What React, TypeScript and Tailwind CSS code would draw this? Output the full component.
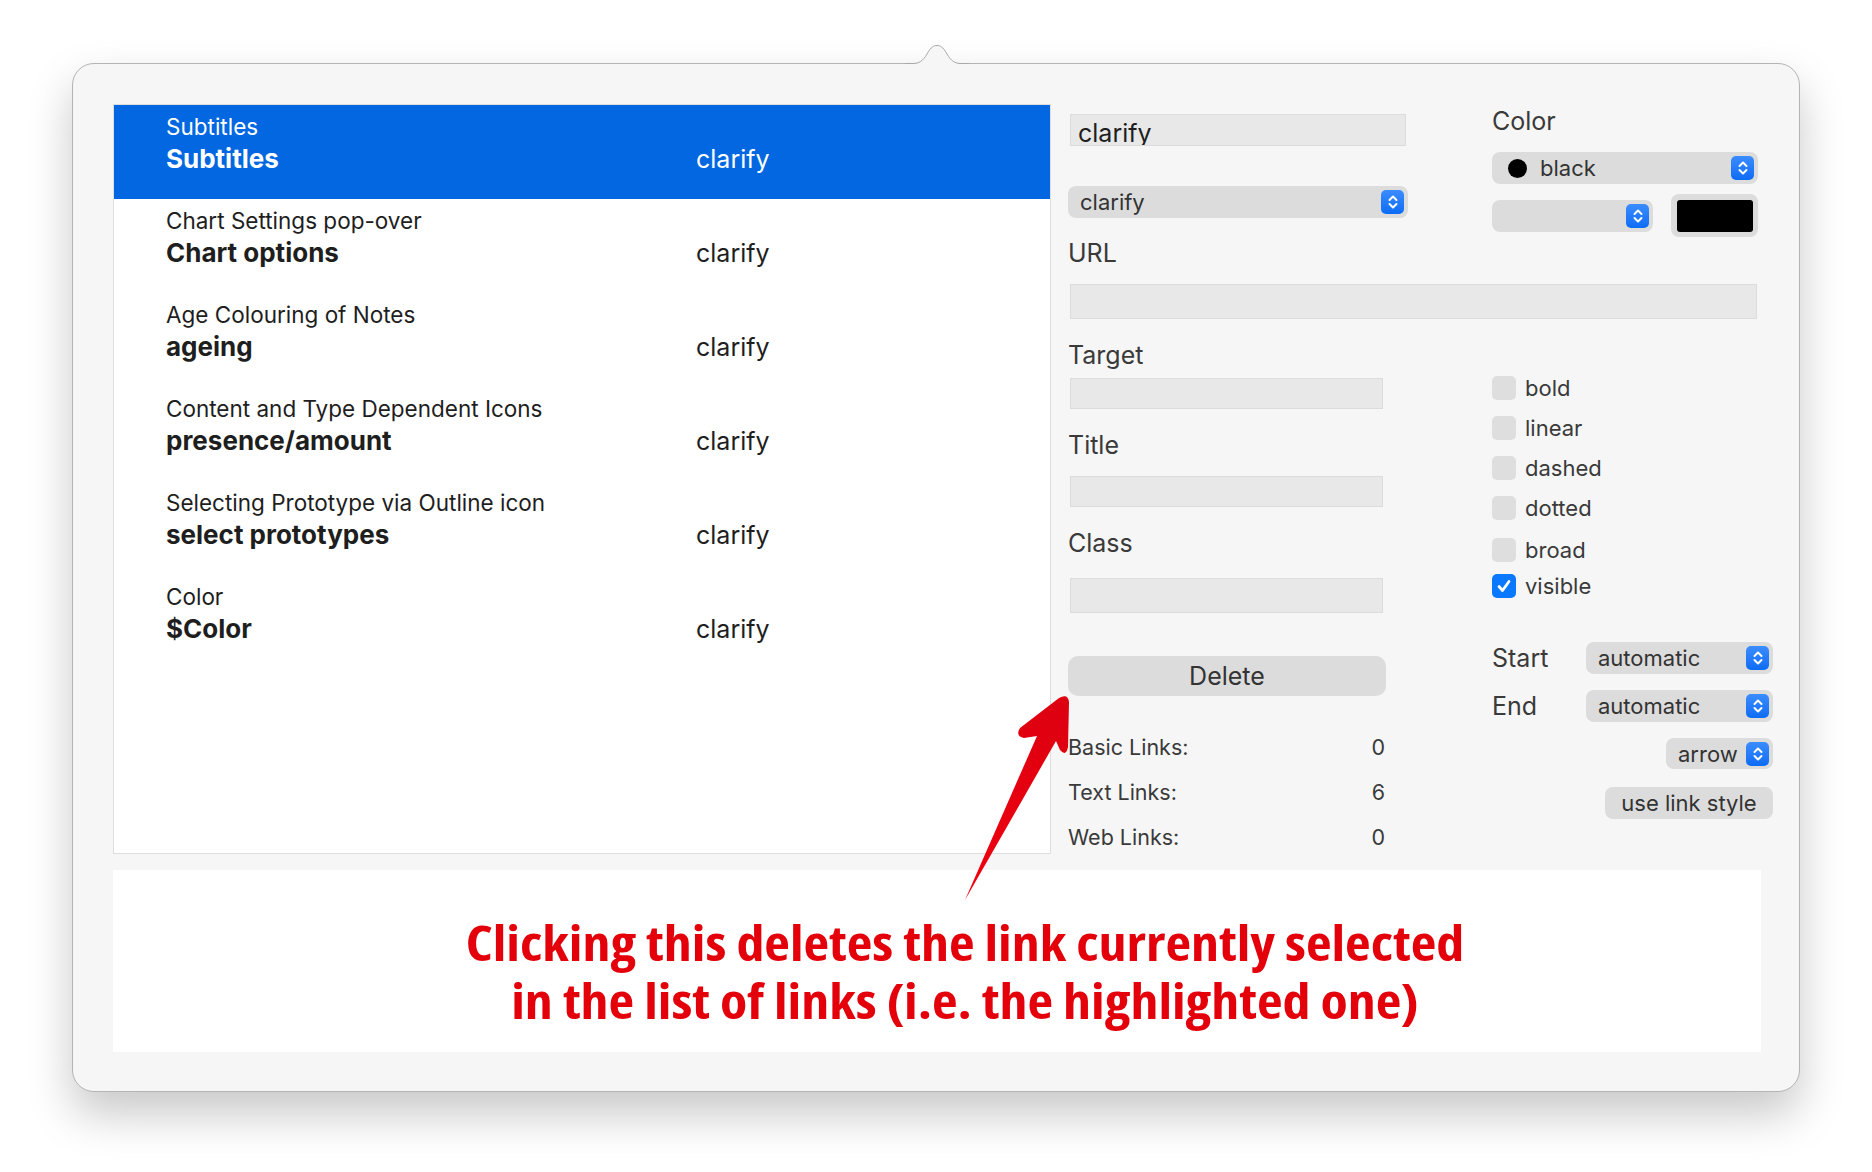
import React from 'react';

const rows = [
  { sub: 'Subtitles', name: 'Subtitles' },
  { sub: 'Chart Settings pop-over', name: 'Chart options' },
  { sub: 'Age Colouring of Notes', name: 'ageing' },
  { sub: 'Content and Type Dependent Icons', name: 'presence/amount' },
  { sub: 'Selecting Prototype via Outline icon', name: 'select prototypes' },
  { sub: 'Color', name: '$Color' },
];

function Stepper() {
  return (
    <div className="flex h-[24px] w-[23px] shrink-0 items-center justify-center rounded-[5px] bg-gradient-to-b from-[#3a8cff] to-[#0a6cf5]">
      <svg width="14" height="20" viewBox="0 0 14 20" fill="none">
        <path d="M3.5 8 L7 4.5 L10.5 8" stroke="white" strokeWidth="2" strokeLinecap="round" strokeLinejoin="round" />
        <path d="M3.5 12 L7 15.5 L10.5 12" stroke="white" strokeWidth="2" strokeLinecap="round" strokeLinejoin="round" />
      </svg>
    </div>
  );
}

function Popup({ label, className, textClass = 'pl-[12px]' }: { label?: string; className: string; textClass?: string }) {
  return (
    <div className={`flex items-center justify-between rounded-[8px] bg-[#dcdcdc] pr-[4px] text-[22px] leading-[28px] text-[#333] ${className}`}>
      <span className={textClass}>{label}</span>
      <Stepper />
    </div>
  );
}

function Check({ label, checked }: { label: string; checked?: boolean }) {
  return (
    <div className="flex h-[24px] items-center gap-[9px] text-[22px] leading-[28px] text-[#3a3a3a]">
      {checked ? (
        <div className="flex h-[24px] w-[24px] items-center justify-center rounded-[5px] bg-[#0a78ff]">
          <svg width="18" height="18" viewBox="0 0 18 18" fill="none">
            <path d="M4 9.5 L7.5 13.5 L14 4.5" stroke="white" strokeWidth="2.8" strokeLinecap="round" strokeLinejoin="round" />
          </svg>
        </div>
      ) : (
        <div className="h-[24px] w-[24px] rounded-[5px] bg-[#dedede]" />
      )}
      <span>{label}</span>
    </div>
  );
}

function Stat({ label, value }: { label: string; value: string }) {
  return (
    <div className="flex h-[28px] w-[317px] items-center justify-between text-[21.5px] leading-[28px] text-[#3a3a3a]">
      <span>{label}</span>
      <span>{value}</span>
    </div>
  );
}

export default function App() {
  return (
    <div className="relative h-[1172px] w-[1872px] overflow-hidden bg-white pl-[72px] pt-[63px] font-['Inter',sans-serif] leading-[30px]">
      <div className="relative flex h-[1029px] w-[1728px] flex-col rounded-[22px] border border-[#b4b4b4] bg-[#f6f6f6] pl-[40px] pt-[40px] shadow-[0_22px_45px_rgba(0,0,0,0.22)]">
        {/* nub */}
        <svg className="absolute left-[832px] top-[-20px]" width="64" height="22" viewBox="0 0 64 22">
          <path d="M0 19.5 L8 19.5 C14 19.5 18 17 22 10 C26 2.5 29 1.5 32 1.5 C35 1.5 38 2.5 42 10 C46 17 50 19.5 56 19.5 L64 19.5 L64 22 L0 22 Z" fill="#f6f6f6" />
          <path d="M0 19.5 L8 19.5 C14 19.5 18 17 22 10 C26 2.5 29 1.5 32 1.5 C35 1.5 38 2.5 42 10 C46 17 50 19.5 56 19.5 L64 19.5" fill="none" stroke="#a9a9a9" strokeWidth="1" />
        </svg>

        <div className="flex items-start gap-[17px]">
          {/* link list */}
          <div className="h-[750px] w-[938px] border border-[#dedede] bg-white">
            {rows.map((r, i) => {
              const sel = i === 0;
              return (
                <div key={r.name} className={`flex h-[94px] pt-[9px] ${sel ? 'bg-[#0267e0] text-white' : 'text-[#1e1e1e]'}`}>
                  <div className="w-[582px] pl-[52px]">
                    <div className="text-[22.5px] leading-[26px]">{r.sub}</div>
                    <div className="mt-[4px] text-[26px] font-bold leading-[30px]">{r.name}</div>
                  </div>
                  <div className="mt-[30px] text-[25px] leading-[30px]">clarify</div>
                </div>
              );
            })}
          </div>

          {/* inspector */}
          <div className="grid grid-cols-[340px_281px] content-start gap-x-[84px]">
            <div className="flex flex-col">
              <div className="ml-[2px] mt-[10px] h-[32px] w-[336px] overflow-hidden border border-[#dcdcdc] bg-[#e8e8e8] pl-[7px] pt-[3px] text-[25px] leading-[30px] text-[#1e1e1e]">
                clarify
              </div>
              <Popup label="clarify" className="mt-[40px] h-[32px] w-[340px]" />
            </div>
            <div className="flex flex-col">
              <div className="mt-[2px] text-[25px] leading-[30px] text-[#3a3a3a]">Color</div>
              <div className="mt-[16px] flex h-[32px] w-[266px] items-center justify-between rounded-[8px] bg-[#dcdcdc] pr-[4px] text-[22px] leading-[28px] text-[#333]">
                <div className="flex items-center gap-[13px] pl-[16px]">
                  <div className="h-[19px] w-[19px] rounded-full bg-black" />
                  <span>black</span>
                </div>
                <Stepper />
              </div>
              <div className="mt-[10px] flex items-start gap-[18px]">
                <Popup className="mt-[6px] h-[32px] w-[161px]" />
                <div className="flex h-[43px] w-[87px] items-center justify-center rounded-[8px] bg-[#dcdcdc]">
                  <div className="h-[32px] w-[76px] rounded-[3px] bg-black" />
                </div>
              </div>
            </div>

            <div className="col-span-2 flex flex-col">
              <div className="mt-[1px] text-[25px] leading-[30px] text-[#3a3a3a]">URL</div>
              <div className="ml-[2px] mt-[16px] h-[35px] w-[687px] border border-[#dcdcdc] bg-[#e8e8e8]" />
            </div>

            <div className="flex flex-col text-[#3a3a3a]">
              <div className="mt-[21px] text-[25px] leading-[30px]">Target</div>
              <div className="ml-[2px] mt-[8px] h-[31px] w-[313px] border border-[#dcdcdc] bg-[#e8e8e8]" />
              <div className="mt-[21px] text-[25px] leading-[30px]">Title</div>
              <div className="ml-[2px] mt-[16px] h-[31px] w-[313px] border border-[#dcdcdc] bg-[#e8e8e8]" />
              <div className="mt-[21px] text-[25px] leading-[30px]">Class</div>
              <div className="ml-[2px] mt-[20px] h-[35px] w-[313px] border border-[#dcdcdc] bg-[#e8e8e8]" />
              <button className="mt-[43px] h-[40px] w-[318px] rounded-[10px] bg-[#dcdcdc] text-[25px] leading-[30px] text-[#333]">Delete</button>
              <div className="mt-[37px] flex flex-col gap-[17px]">
                <Stat label="Basic Links:" value="0" />
                <Stat label="Text Links:" value="6" />
                <Stat label="Web Links:" value="0" />
              </div>
            </div>
            <div className="flex flex-col">
              <div className="mt-[57px] flex flex-col">
                <Check label="bold" />
                <div className="mt-[16px]"><Check label="linear" /></div>
                <div className="mt-[16px]"><Check label="dashed" /></div>
                <div className="mt-[16px]"><Check label="dotted" /></div>
                <div className="mt-[18px]"><Check label="broad" /></div>
                <div className="mt-[12px]"><Check label="visible" checked /></div>
              </div>
              <div className="mt-[44px] flex items-center justify-between">
                <span className="text-[25px] leading-[30px] text-[#3a3a3a]">Start</span>
                <Popup label="automatic" className="h-[32px] w-[187px]" />
              </div>
              <div className="mt-[16px] flex items-center justify-between">
                <span className="text-[25px] leading-[30px] text-[#3a3a3a]">End</span>
                <Popup label="automatic" className="h-[32px] w-[187px]" />
              </div>
              <Popup label="arrow" className="mt-[16px] h-[31px] w-[107px] self-end" />
              <button className="mt-[18px] h-[32px] w-[168px] self-end rounded-[8px] bg-[#dcdcdc] text-[22px] leading-[28px] text-[#333]">use link style</button>
            </div>
          </div>
        </div>

        {/* annotation */}
        <div className="mt-[16px] h-[182px] w-[1648px] bg-white pl-[56px] pt-[44px]">
          <div className="scale-x-[1.165] text-center font-['Open_Sans',sans-serif] text-[48px] font-bold leading-[58px] font-stretch-condensed text-[#e3000b]">
            <div>Clicking this deletes the link currently selected</div>
            <div>in the list of links (i.e. the highlighted one)</div>
          </div>
        </div>
      </div>

      {/* red arrow */}
      <svg className="pointer-events-none absolute inset-0" width="1872" height="1172" viewBox="0 0 1872 1172">
        <defs>
          <linearGradient id="arr" x1="965" y1="900" x2="1064" y2="697" gradientUnits="userSpaceOnUse">
            <stop offset="0" stopColor="#f0000f" />
            <stop offset="1" stopColor="#dc0010" />
          </linearGradient>
        </defs>
        <path
          d="M965 900 L1037 736 L1024 738 Q1015 736 1020 728 L1059 698 Q1068 693 1069 702 L1068 747 Q1066 757 1060 750 L1056 741 Z"
          fill="url(#arr)"
        />
      </svg>
    </div>
  );
}
